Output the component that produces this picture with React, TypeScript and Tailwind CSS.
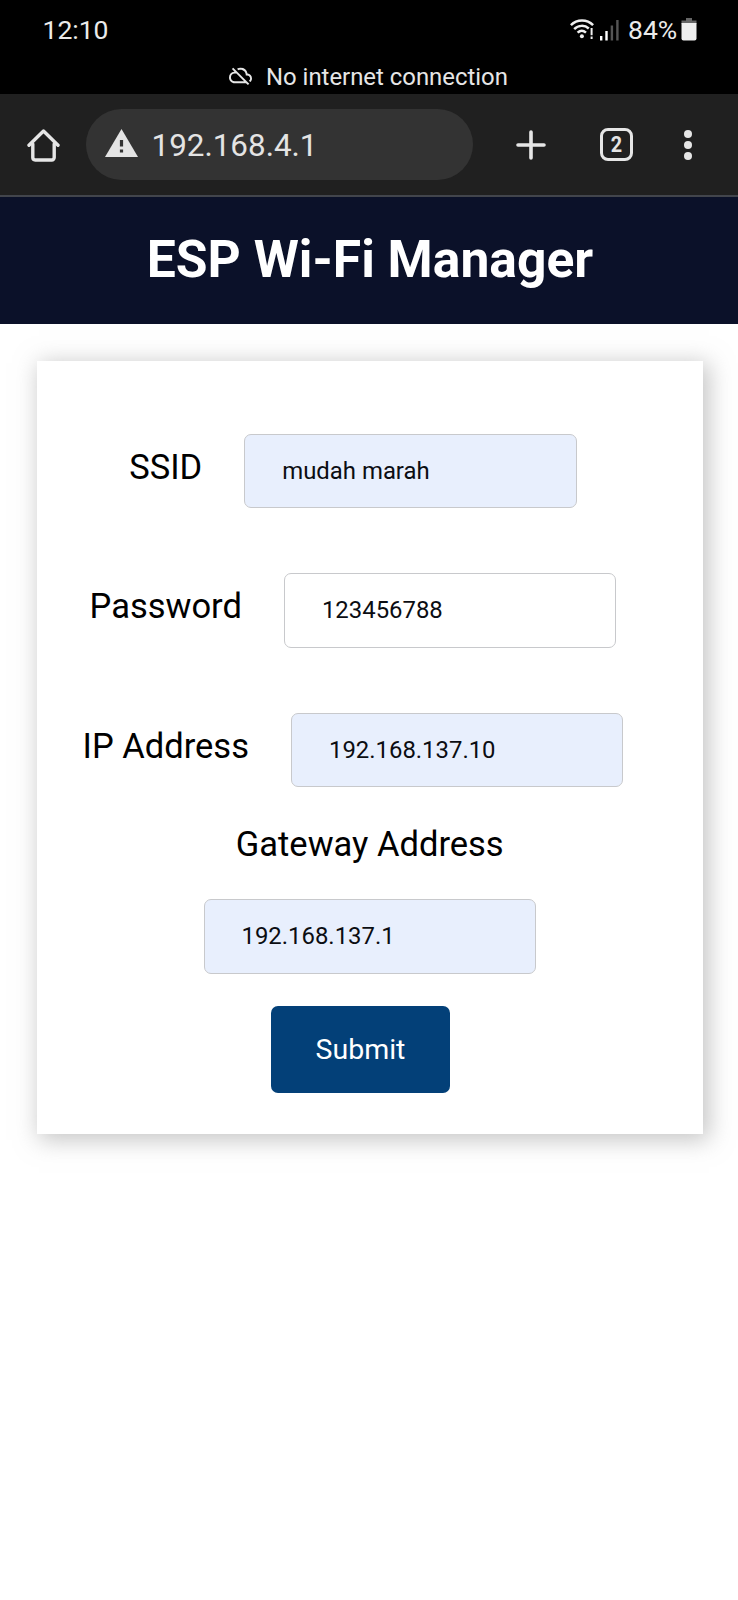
import { MdOutlineCloudOff } from "react-icons/md";

function WifiAlert() {
  return (
    <svg width="24" height="21" viewBox="0 0 24 21" fill="none" stroke="#efefef" strokeWidth="2.5" className="ml-[570px] mb-[2px]">
      <path d="M.9 6.2C7-.1 17-.1 23.1 6.2" />
      <path d="M4.2 10.1c4.2-4.1 10.4-4.3 14.6-.6" />
      <path d="M7.6 13.7c2.5-2.4 5.8-2.4 8.4-.1" />
      <circle cx="11.9" cy="17.3" r="2" fill="#efefef" stroke="none" />
      <path d="M21.6 9v7.3M21.6 17.6v2.4" strokeWidth="2" />
    </svg>
  );
}

function Signal() {
  return (
    <svg width="19" height="21" viewBox="0 0 19 21" className="ml-[6px]">
      <rect x="0" y="16" width="2.4" height="4.5" fill="#fff" />
      <rect x="5.3" y="11" width="2.4" height="9.5" fill="#fff" />
      <rect x="10.7" y="5.5" width="2.4" height="15" fill="#555" />
      <rect x="16.2" y="0" width="2.4" height="20.5" fill="#555" />
    </svg>
  );
}

function Battery() {
  return (
    <svg width="16" height="23" viewBox="0 0 16 23" className="mb-[2px]">
      <path d="M5 0h6v2.5h4.5V6H.5V2.5H5z" fill="#666" />
      <path d="M.5 5h15v15.5a2 2 0 0 1-2 2h-11a2 2 0 0 1-2-2z" fill="#eee" />
    </svg>
  );
}

function StatusBar() {
  return (
    <div className="h-[94px] bg-black text-[#ebebeb]">
      <div className="flex h-[60px] items-center text-[26.5px] leading-none">
        <div className="w-0 whitespace-nowrap pl-[42.5px]">12:10</div>
        <div className="-ml-[42.5px] flex items-center">
          <WifiAlert />
          <Signal />
          <div className="ml-[9px] w-[52.5px]">84%</div>
          <Battery />
        </div>
      </div>
      <div className="flex h-[34px] items-center pl-[229px] text-[23.9px] leading-none text-[#e6e6e6]">
        <MdOutlineCloudOff size={23} className="mb-[3px]" />
        <span className="ml-[14px] mt-[1px]">No internet connection</span>
      </div>
    </div>
  );
}

function Toolbar() {
  return (
    <div className="flex h-[103px] items-center border-b-2 border-[#42454c] bg-[#202020] text-[#e4e4e4]">
      <svg width="34" height="34" viewBox="0 0 34 34" fill="none" stroke="#e6e6e6" strokeWidth="3.4" strokeLinecap="round" strokeLinejoin="round" className="ml-[27px]">
        <path d="M2 17.3 16.5 3 31 17.3" />
        <path d="M5.8 16v13.6a2.4 2.4 0 0 0 2.4 2.4h16.6a2.4 2.4 0 0 0 2.4-2.4V16" />
      </svg>
      <div className="ml-[25px] flex h-[71px] w-[387px] items-center rounded-full bg-[#333333] pl-[19px]">
        <svg width="33" height="28" viewBox="0 0 33 28" className="mb-[4px]">
          <path d="M16.5 0 33 28H0z" fill="#e4e4e4" />
          <path d="M14.9 11h3.2v6.4h-3.2zM14.9 20.4h3.2v3.1h-3.2z" fill="#333333" />
        </svg>
        <span className="ml-[13.5px] mt-[3px] text-[31.4px] leading-none">192.168.4.1</span>
      </div>
      <svg width="30" height="30" viewBox="0 0 30 30" stroke="#e6e6e6" strokeWidth="3.6" strokeLinecap="round" className="ml-[42.5px]">
        <path d="M15 2v26M2 15h26" />
      </svg>
      <div className="ml-[54px] flex h-[33px] w-[33px] items-center justify-center rounded-[8px] border-3 border-[#e6e6e6] text-[22px] font-bold leading-none">
        <span className="scale-x-90">2</span>
      </div>
      <svg width="8" height="30" viewBox="0 0 8 30" fill="#e6e6e6" className="ml-[51px]">
        <circle cx="4" cy="4" r="4" />
        <circle cx="4" cy="15" r="4" />
        <circle cx="4" cy="26" r="4" />
      </svg>
    </div>
  );
}

const inputClass =
  "h-[74.5px] w-[332.5px] rounded-[7px] border border-[#c8c9cc] pl-[37px] text-[23.9px] leading-none text-[#0b0d12] outline-none";

function Field({ label, value, filled }: { label: string; value: string; filled: boolean }) {
  return (
    <div className="mb-[65px] flex h-[74.5px] items-center justify-center pr-[33.5px]">
      <label className="mr-[42px] pb-[7.5px] text-[34.5px] leading-none">{label}</label>
      <input className={`${inputClass} ${filled ? "bg-[#e8effd]" : "bg-white"}`} defaultValue={value} />
    </div>
  );
}

export default function App() {
  return (
    <div className="min-h-[1600px] w-[738px] overflow-hidden bg-white font-[Roboto,sans-serif] text-black">
      <StatusBar />
      <Toolbar />
      <header className="flex h-[127px] items-center justify-center bg-[#0b1129] pb-[2px] pl-[2px]">
        <h1 className="text-[51.6px] font-bold leading-none text-white">ESP Wi-Fi Manager</h1>
      </header>
      <main className="ml-[37px] mt-[37px] h-[773px] w-[665.5px] bg-white pt-[72.5px] shadow-[4px_4px_22px_2px_rgba(140,140,140,0.5)]">
        <form>
          <Field label="SSID" value="mudah marah" filled />
          <Field label="Password" value="123456788" filled={false} />
          <Field label="IP Address" value="192.168.137.10" filled />
          <div className="-mt-[65px] flex flex-col items-center">
            <label className="mt-[39.5px] text-[34.5px] leading-none">Gateway Address</label>
            <input className={`${inputClass} mt-[38px] bg-[#e8effd]`} defaultValue="192.168.137.1" />
          </div>
          <button type="button" className="ml-[234px] mt-[32px] h-[87px] w-[179px] rounded-[7px] bg-[#034078] pt-[2px] text-[28.5px] leading-none text-white">
            Submit
          </button>
        </form>
      </main>
    </div>
  );
}
